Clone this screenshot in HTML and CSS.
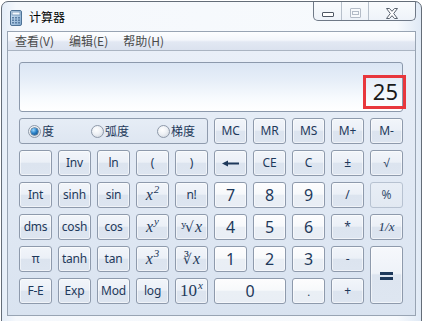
FILE: index.html
```html
<!DOCTYPE html>
<html>
<head>
<meta charset="utf-8">
<title>计算器</title>
<link rel="stylesheet" href="styles.css">
</head>
<body>
<div class="window">
  <div class="titlebar">
    <svg class="app-icon" width="12" height="16" viewBox="0 0 12 16">
      <defs>
        <linearGradient id="ib" x1="0" y1="0" x2="1" y2="1">
          <stop offset="0" stop-color="#d8e9f8"/>
          <stop offset="1" stop-color="#7fa6cc"/>
        </linearGradient>
      </defs>
      <rect x="0.5" y="0.5" width="11" height="15" rx="1.5" fill="url(#ib)" stroke="#4f7397"/>
      <rect x="2" y="2" width="8" height="3" fill="#f4f9fe" stroke="#6d8fb2" stroke-width="0.8"/>
      <g fill="#5b7fa5">
        <rect x="2" y="7" width="2" height="1.5"/><rect x="5" y="7" width="2" height="1.5"/><rect x="8" y="7" width="2" height="1.5"/>
        <rect x="2" y="9.5" width="2" height="1.5"/><rect x="5" y="9.5" width="2" height="1.5"/><rect x="8" y="9.5" width="2" height="1.5"/>
        <rect x="2" y="12" width="2" height="1.5"/><rect x="5" y="12" width="2" height="1.5"/><rect x="8" y="12" width="2" height="1.5"/>
      </g>
    </svg>
    <span class="title">计算器</span>
    <div class="caption">
      <div class="cap cap-min"><span class="min-glyph"></span></div>
      <div class="cap cap-max"><span class="max-glyph"><span class="max-inner"></span></span></div>
      <div class="cap cap-close">
        <svg width="12" height="11" viewBox="0 0 12 11">
          <path d="M0.5 0.5 H3.5 L6 3.3 L8.5 0.5 H11.5 L7.7 5.5 L11.5 10.5 H8.5 L6 7.7 L3.5 10.5 H0.5 L4.3 5.5 Z" fill="#ffffff" stroke="#59626e" stroke-width="1" stroke-linejoin="round"/>
        </svg>
      </div>
    </div>
  </div>
  <div class="client">
    <div class="menubar">
      <span class="menu">查看(V)</span>
      <span class="menu">编辑(E)</span>
      <span class="menu">帮助(H)</span>
    </div>
    <div class="calc">
      <div class="display">
        <span class="value">25</span>
        <span class="mark"></span>
      </div>
      <div class="keys">
        <div class="radios">
          <label class="radio r1"><span class="dot on"></span>度</label>
          <label class="radio r2"><span class="dot"></span>弧度</label>
          <label class="radio r3"><span class="dot"></span>梯度</label>
        </div>
        <div class="key">MC</div>
        <div class="key">MR</div>
        <div class="key">MS</div>
        <div class="key">M+</div>
        <div class="key">M-</div>

        <div class="key"></div>
        <div class="key">Inv</div>
        <div class="key">ln</div>
        <div class="key">(</div>
        <div class="key">)</div>
        <div class="key">
          <svg width="17" height="7" viewBox="0 0 17 7"><path d="M0 3.5 L6 0.5 V6.5 Z" fill="#1e395b"/><rect x="5" y="2.5" width="12" height="2" fill="#1e395b"/></svg>
        </div>
        <div class="key">CE</div>
        <div class="key">C</div>
        <div class="key">±</div>
        <div class="key">√</div>

        <div class="key">Int</div>
        <div class="key">sinh</div>
        <div class="key">sin</div>
        <div class="key math"><span class="m"><i>x</i><sup>2</sup></span></div>
        <div class="key">n!</div>
        <div class="key num">7</div>
        <div class="key num">8</div>
        <div class="key num">9</div>
        <div class="key">/</div>
        <div class="key faded">%</div>

        <div class="key">dms</div>
        <div class="key">cosh</div>
        <div class="key">cos</div>
        <div class="key math"><span class="m"><i>x</i><sup><i>y</i></sup></span></div>
        <div class="key math"><span class="m"><span class="rad">ʸ√</span><i>x</i></span></div>
        <div class="key num">4</div>
        <div class="key num">5</div>
        <div class="key num">6</div>
        <div class="key">*</div>
        <div class="key recip"><span class="m">1/<i>x</i></span></div>

        <div class="key">π</div>
        <div class="key">tanh</div>
        <div class="key">tan</div>
        <div class="key math"><span class="m"><i>x</i><sup>3</sup></span></div>
        <div class="key math"><span class="m"><span class="rad">∛</span><i>x</i></span></div>
        <div class="key num">1</div>
        <div class="key num">2</div>
        <div class="key num">3</div>
        <div class="key">-</div>
        <div class="key equals"><span class="eq"></span></div>

        <div class="key">F-E</div>
        <div class="key">Exp</div>
        <div class="key">Mod</div>
        <div class="key">log</div>
        <div class="key math ten"><span class="m">10<sup><i>x</i></sup></span></div>
        <div class="key num zero">0</div>
        <div class="key num point">.</div>
        <div class="key">+</div>
      </div>
    </div>
  </div>
</div>
</body>
</html>
```

FILE: styles.css
```css
html, body {
  margin: 0;
  padding: 0;
  width: 423px;
  height: 321px;
  overflow: hidden;
  background: #ffffff;
}

.window {
  box-sizing: border-box;
  margin: 1px 0 0 1px;
  width: 421px;
  height: 340px;
  padding: 0 5px;
  border: 1px solid #646d78;
  border-radius: 7px 7px 0 0;
  background: linear-gradient(90deg, #e4edf8 0px, #f5f8fc 14px, #f7fafd 395px, #dfe9f5 419px);
  font-family: "Noto Sans", "Noto Sans CJK SC", sans-serif;
}

.titlebar {
  height: 29px;
  display: flex;
  align-items: flex-start;
}

.app-icon {
  margin: 8px 0 0 3px;
  flex: none;
}

.title {
  margin: 7px 0 0 7px;
  font: 12px/16px "Noto Sans CJK SC", sans-serif;
  color: #000000;
}

.caption {
  margin-left: auto;
  box-sizing: border-box;
  width: 103px;
  height: 19px;
  display: flex;
  border: 1px solid #6f7987;
  border-top: none;
  border-radius: 0 0 5px 5px;
  background: linear-gradient(#f9fbfd, #eef3f9);
  overflow: hidden;
}

.cap {
  display: flex;
  justify-content: center;
  align-items: flex-start;
}

.cap-min {
  width: 27px;
  border-right: 1px solid #b7c0cb;
}

.cap-max {
  width: 26px;
  border-right: 1px solid #b7c0cb;
}

.cap-close {
  flex: 1;
  padding-top: 6px;
}

.min-glyph {
  margin-top: 10px;
  width: 10px;
  height: 3px;
  border: 1px solid #4f5864;
  border-radius: 1px;
  background: #ffffff;
}

.max-glyph {
  margin-top: 6px;
  box-sizing: border-box;
  width: 11px;
  height: 10px;
  border: 1px solid #b4bcc7;
  border-radius: 1px;
  display: flex;
  justify-content: center;
  align-items: center;
  background: #f8fafc;
}

.max-inner {
  box-sizing: border-box;
  width: 7px;
  height: 4px;
  border: 1px solid #b4bcc7;
}

.client {
  box-sizing: border-box;
  height: 285px;
  border: 1px solid #98a4b3;
  display: flex;
  flex-direction: column;
}

.menubar {
  box-sizing: border-box;
  height: 19px;
  flex: none;
  display: flex;
  border-bottom: 1px solid #aab4c2;
  background: linear-gradient(#fdfeff 0%, #f3f6fb 45%, #e2e8f3 55%, #dbe2ef 100%);
}

.menu {
  padding: 0 7px;
  font: 12px/17px "Noto Sans CJK SC", sans-serif;
  color: #4a4a4a;
}

.menu + .menu {
  margin-left: 1px;
}

.calc {
  flex: 1;
  padding: 11px 11px 0 11px;
  background: linear-gradient(#e9eff8, #d9e3f0);
}

.display {
  box-sizing: border-box;
  position: relative;
  width: 384px;
  height: 50px;
  border: 1px solid #8c99ac;
  border-radius: 3px;
  background: linear-gradient(#dbe6f4 0%, #e6eef8 35%, #f8fbfe 75%, #ffffff 100%);
  display: flex;
  justify-content: flex-end;
  align-items: flex-end;
  padding: 0 4px 9px 0;
}

.value {
  font: 22px/22px "Noto Sans", sans-serif;
  color: #1b1b1b;
}

.mark {
  position: absolute;
  left: 343px;
  top: 12px;
  width: 43px;
  height: 34px;
  box-sizing: border-box;
  border: 3px solid #e8373d;
}

.keys {
  margin-top: 6px;
  display: grid;
  grid-template-columns: repeat(10, 33px);
  grid-auto-rows: 26px;
  gap: 6px;
}

.radios {
  grid-column: span 5;
  box-sizing: border-box;
  border: 1px solid #8f9bad;
  border-radius: 3px;
  background: linear-gradient(#e6edf6, #dee6f1);
  display: flex;
  align-items: center;
  padding-left: 8px;
}

.radio {
  display: flex;
  align-items: center;
  font: 12px/16px "Noto Sans CJK SC", sans-serif;
  color: #1e395b;
}

.r1 { width: 63px; }
.r2 { width: 66px; }

.dot {
  box-sizing: border-box;
  width: 13px;
  height: 13px;
  margin-right: 1px;
  border: 1px solid #8e99a9;
  border-radius: 50%;
  background: radial-gradient(circle at 40% 35%, #ffffff 0%, #eef1f5 45%, #c9d0d9 100%);
  display: flex;
  align-items: center;
  justify-content: center;
}

.dot.on::after {
  content: "";
  width: 7px;
  height: 7px;
  border-radius: 50%;
  background: radial-gradient(circle at 35% 30%, #9fd9ff 0%, #2b83c9 45%, #0e3f74 100%);
  box-shadow: 0 0 0 0.5px #163a5c;
}

.key {
  box-sizing: border-box;
  display: flex;
  align-items: center;
  justify-content: center;
  border: 1px solid #8e9aac;
  border-radius: 3px;
  background: linear-gradient(#f2f5fa 0%, #ebf0f7 47%, #dce4ef 50%, #dde5f0 100%);
  box-shadow: inset 0 0 0 1px rgba(255, 255, 255, 0.55);
  color: #1e395b;
  font: 12px/14px "Noto Sans", sans-serif;
  letter-spacing: -0.2px;
}

.key.num {
  font-size: 16px;
  line-height: 18px;
  background: linear-gradient(#fdfdfe 0%, #f7f9fb 47%, #eaeff5 50%, #e9eef5 100%);
}

.key.num.point {
  font-size: 11px;
  line-height: 14px;
  padding-top: 2px;
}

.key.faded {
  border-color: #b7c2d1;
  background: linear-gradient(#e8eef6, #e2e9f2);
  box-shadow: none;
  color: #3a5170;
}

.key.zero {
  grid-column: span 2;
}

.key.equals {
  grid-row: span 2;
  background: linear-gradient(#f6f8fc 0%, #eef2f8 47%, #dde5f0 50%, #dee6f1 100%);
}

.eq {
  box-sizing: border-box;
  width: 13px;
  height: 8px;
  border-top: 3px solid #1e395b;
  border-bottom: 3px solid #1e395b;
  margin-top: 1px;
}

.key.math {
  font: italic 16px/18px "Liberation Serif", serif;
  letter-spacing: 0;
}

.m {
  display: inline-block;
  white-space: nowrap;
}

.key.math sup {
  font-size: 11px;
  line-height: 0;
  vertical-align: 7px;
  margin-left: 1px;
}

.key.math .rad {
  font: 14px/18px "DejaVu Serif", serif;
  font-style: normal;
  letter-spacing: -2px;
  margin-right: 3px;
}

.key.ten {
  font-style: normal;
  font-size: 17px;
}

.key.recip {
  font: italic 13px/16px "Liberation Serif", serif;
  letter-spacing: 0;
}
```
